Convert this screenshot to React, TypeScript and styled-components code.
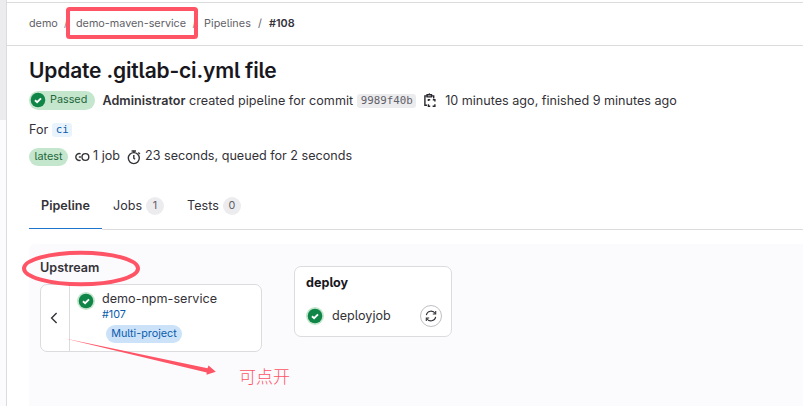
import React from "react";
import styled, { createGlobalStyle } from "styled-components";

const GlobalStyle = createGlobalStyle`
  * { box-sizing: border-box; }
  body {
    margin: 0;
    background: #fff;
    color: #333238;
    font-family: Inter, "Noto Sans CJK SC", sans-serif;
    font-feature-settings: "cv05" 1;
    overflow: hidden;
  }
`;

const Page = styled.div`
  position: relative;
  display: flex;
  width: 803px;
  height: 406px;
  overflow: hidden;
`;

const Sidebar = styled.aside`
  flex: none;
  width: 7px;
  border-right: 1px solid #dcdcde;
  background: linear-gradient(#ececef 0 120px, #fbfafd 120px);
`;

const Main = styled.main`
  flex: 1;
  padding-top: 2px;
`;

const Text = styled.span<{ $size?: number; $weight?: number; $color?: string; $track?: number }>`
  white-space: pre;
  font-size: ${(p) => p.$size ?? 12.6}px;
  font-weight: ${(p) => p.$weight ?? 400};
  color: ${(p) => p.$color ?? "#333238"};
  letter-spacing: ${(p) => p.$track ?? 0}px;
`;

const Breadcrumbs = styled.nav`
  display: flex;
  align-items: center;
  height: 44px;
  padding: 0 0 1px 22px;
  border: solid #dcdcde;
  border-width: 1px 0;
`;

const Crumb = styled(Text)<{ $w: number }>`
  width: ${(p) => p.$w}px;
`;

const Title = styled.h1`
  margin: 0;
  height: 45px;
  padding: 10px 0 0 22px;
  font-size: 21px;
  line-height: 29px;
  font-weight: 600;
  letter-spacing: -0.17px;
  color: #18171d;
`;

const Line = styled.div<{ $h: number }>`
  display: flex;
  align-items: center;
  height: ${(p) => p.$h}px;
  padding-left: 22px;
  line-height: 18px;
`;

const ForLine = styled(Line)`
  padding-top: 2px;
`;

const RaisedText = styled(Text)`
  padding-bottom: 2px;
`;

const Pill = styled.span<{ $w: number; $h: number; $tone: "green" | "blue" | "grey"; $gap?: number }>`
  display: flex;
  align-items: center;
  justify-content: ${(p) => (p.$gap ? "flex-start" : "center")};
  gap: ${(p) => p.$gap ?? 0}px;
  flex: none;
  width: ${(p) => p.$w}px;
  height: ${(p) => p.$h}px;
  padding-bottom: 1px;
  border-radius: 10px;
  background: ${(p) => ({ green: "#c3e6cd", blue: "#cbe2f9", grey: "#ececef" })[p.$tone]};
`;

const Code = styled.code<{ $w: number; $blue?: boolean }>`
  width: ${(p) => p.$w}px;
  height: 14px;
  border-radius: 3px;
  font: 10.8px/14px "DejaVu Sans Mono", monospace;
  text-align: center;
  color: ${(p) => (p.$blue ? "#0b5cad" : "#626168")};
  background: ${(p) => (p.$blue ? "#e9f3fc" : "#ececef")};
`;

const Space = styled.span<{ $w: number }>`
  flex: none;
  width: ${(p) => p.$w}px;
`;

const Tabs = styled.div`
  display: flex;
  height: 47px;
  margin: 17px 0 0 22px;
  border-bottom: 1px solid #dcdcde;
`;

const Tab = styled.div<{ $w: number; $active?: boolean }>`
  display: flex;
  align-items: center;
  justify-content: center;
  gap: 4px;
  width: ${(p) => p.$w}px;
  height: 47px;
  border-bottom: 1px solid ${(p) => (p.$active ? "#fff" : "transparent")};
  box-shadow: ${(p) => (p.$active ? "inset 0 -1px #1f75cb" : "none")};
`;

const TabLabel = styled(Text)`
  padding-bottom: 1px;
`;

const Graph = styled.section`
  display: flex;
  align-items: flex-start;
  gap: 32px;
  height: 162px;
  margin: 14px 0 0 22px;
  padding-left: 11px;
  border-top-left-radius: 6px;
  background: #fbfafd;
`;

const Upstream = styled.div`
  width: 222px;
`;

const UpstreamHeading = styled.div`
  height: 40px;
  padding-top: 12px;
  line-height: 20px;
`;

const Card = styled.div`
  border: 1px solid #dcdcde;
  border-radius: 7px;
  background: #fff;
`;

const UpstreamCard = styled(Card)`
  display: flex;
  height: 68px;
`;

const Collapse = styled.div`
  display: flex;
  align-items: center;
  justify-content: center;
  width: 29px;
  padding-right: 2px;
  border-right: 1px solid #dcdcde;
`;

const UpstreamBody = styled.div`
  display: flex;
  gap: 7px;
  padding: 7px 0 0 7px;
`;

const Details = styled.div`
  display: flex;
  flex-direction: column;
  margin-top: -1px;
  line-height: 15px;
`;

const PipelineLink = styled(Text)`
  padding-top: 1px;
`;

const PillRow = styled.div`
  padding: 3px 0 0 4px;
`;

const Stage = styled(Card)`
  width: 158px;
  height: 71px;
  margin-top: 22px;
  padding: 4px 9px 0 11px;
`;

const StageName = styled.div`
  line-height: 20px;
`;

const Job = styled.div`
  display: flex;
  align-items: center;
  height: 22px;
  margin-top: 12px;
`;

const JobName = styled(Text)`
  padding-bottom: 2px;
`;

const Retry = styled.span`
  display: flex;
  align-items: center;
  justify-content: center;
  width: 22px;
  height: 22px;
  margin-left: auto;
  border: 1px solid #bfbfc3;
  border-radius: 50%;
`;

const Overlay = styled.svg`
  position: absolute;
  inset: 0;
`;

const Note = styled.span`
  position: absolute;
  left: 239px;
  top: 364px;
  font: 300 17px/24px "Noto Sans CJK SC", sans-serif;
  color: #ff5465;
`;

const StatusSvg = styled.svg`
  flex: none;
`;

const Success = ({ halo = true }: { halo?: boolean }) => (
  <StatusSvg width="18" height="18" viewBox="0 0 18 18">
    {halo && <circle cx="9" cy="9" r="9" fill="#c3e6cd" />}
    <circle cx="9" cy="9" r="7.3" fill="#108548" />
    <path d="M6 9.2l2.1 2 3.9-3.9" fill="none" stroke="#fff" strokeWidth="1.9" />
  </StatusSvg>
);

const CopyIcon = () => (
  <svg width="14" height="15" viewBox="0 0 14 15" fill="none" stroke="#28272d" strokeWidth="1.4">
    <path d="M4 2.9H1.9v9.4H4M8.6 2.9h2.1v2.6" />
    <path d="M4.1 1.8h4.4v2.1H4.1z" />
    <path d="M5.8 1h1" />
    <path d="M5.4 8V6.7h1.8M9.8 6.7h2.1V8.4M5.4 11.2v2h1.8M9.6 13.2h2.3v-2" />
  </svg>
);

const JobsIcon = () => (
  <svg width="15" height="10" viewBox="0 0 15 10" fill="none" stroke="#333238" strokeWidth="1.4">
    <path d="M5.6 1.9A3.4 3.4 0 1 0 5.6 8.1" />
    <circle cx="10.4" cy="5" r="3.4" />
    <path d="M3.8 5h2.2" />
  </svg>
);

const TimerIcon = () => (
  <svg width="14" height="15" viewBox="0 0 14 15" fill="none" stroke="#333238" strokeWidth="1.4">
    <circle cx="6.8" cy="8.1" r="5.5" />
    <path d="M4.6 1h4.4M6.8 1v2M6.8 5v3.2l1.3 1M11.3 2.4l1.6 1.6" />
  </svg>
);

const Chevron = () => (
  <svg width="8" height="12" viewBox="0 0 8 12" fill="none" stroke="#333238" strokeWidth="1.4">
    <path d="M6.6 1L1.6 6l5 5" />
  </svg>
);

const RetryIcon = () => (
  <svg width="12" height="12" viewBox="0 0 12 12" fill="none" stroke="#333238" strokeWidth="1.1">
    <path d="M1.3 5.1A4.8 4.8 0 0 1 10.2 3.6M10.7 6.9A4.8 4.8 0 0 1 1.8 8.4" />
    <path d="M10.7 1v3H7.8M1.3 11V8h2.9" />
  </svg>
);

export default function App() {
  return (
    <Page>
      <GlobalStyle />
      <Sidebar />
      <Main>
        <Breadcrumbs>
          <Crumb $w={35} $size={10.8} $color="#626168">demo</Crumb>
          <Crumb $w={12} $size={10.8} $color="#89888d">/</Crumb>
          <Crumb $w={116.5} $size={10.8} $color="#626168">demo-maven-service</Crumb>
          <Crumb $w={11.5} $size={10.8} $color="#89888d">/</Crumb>
          <Crumb $w={54} $size={10.8} $color="#626168" $track={0.06}>Pipelines</Crumb>
          <Crumb $w={11} $size={10.8} $color="#626168">/</Crumb>
          <Crumb $w={40} $size={10.8} $weight={600}>#108</Crumb>
        </Breadcrumbs>
        <Title>Update .gitlab-ci.yml file</Title>
        <Line $h={19}>
          <Pill $w={66} $h={19} $tone="green" $gap={3}>
            <Success halo={false} />
            <Text $size={10.8} $color="#24663b">Passed</Text>
          </Pill>
          <Space $w={7.5} />
          <Text $weight={600}>Administrator</Text>
          <Text $track={0.02}> created pipeline for commit</Text>
          <Space $w={4} />
          <Code $w={59}>9989f40b</Code>
          <Space $w={7} />
          <CopyIcon />
          <Space $w={8} />
          <Text>10 minutes ago, finished 9 minutes ago</Text>
        </Line>
        <ForLine $h={38}>
          <Text>For</Text>
          <Space $w={4} />
          <Code $w={20} $blue>ci</Code>
        </ForLine>
        <Line $h={18}>
          <Pill $w={39} $h={18} $tone="green">
            <Text $size={10.8} $color="#24663b">latest</Text>
          </Pill>
          <Space $w={7} />
          <JobsIcon />
          <Space $w={3} />
          <RaisedText>1 job</RaisedText>
          <Space $w={7} />
          <TimerIcon />
          <Space $w={4} />
          <RaisedText>23 seconds, queued for 2 seconds</RaisedText>
        </Line>
        <Tabs>
          <Tab $w={73} $active><TabLabel $weight={600}>Pipeline</TabLabel></Tab>
          <Tab $w={73}>
            <TabLabel>Jobs</TabLabel>
            <Pill $w={18} $h={18} $tone="grey"><Text $size={10.8} $color="#626168">1</Text></Pill>
          </Tab>
          <Tab $w={78}>
            <TabLabel>Tests</TabLabel>
            <Pill $w={18} $h={18} $tone="grey"><Text $size={10.8} $color="#626168">0</Text></Pill>
          </Tab>
        </Tabs>
        <Graph>
          <Upstream>
            <UpstreamHeading><Text $weight={600}>Upstream</Text></UpstreamHeading>
            <UpstreamCard>
              <Collapse><Chevron /></Collapse>
              <UpstreamBody>
                <Success />
                <Details>
                  <Text>demo-npm-service</Text>
                  <PipelineLink $size={10.8} $color="#0b5cad">#107</PipelineLink>
                  <PillRow>
                    <Pill $w={76} $h={18} $tone="blue">
                      <Text $size={10.8} $color="#0b5cad">Multi-project</Text>
                    </Pill>
                  </PillRow>
                </Details>
              </UpstreamBody>
            </UpstreamCard>
          </Upstream>
          <Stage>
            <StageName><Text $weight={700} $color="#18171d">deploy</Text></StageName>
            <Job>
              <Success />
              <Space $w={8} />
              <JobName>deployjob</JobName>
              <Retry><RetryIcon /></Retry>
            </Job>
          </Stage>
        </Graph>
      </Main>
      <Overlay width="803" height="406" fill="none">
        <rect x="68" y="9" width="128" height="28" rx="1.5" stroke="#ff5465" strokeWidth="4" />
        <ellipse cx="81" cy="268.5" rx="57" ry="15.7" stroke="#ff5465" strokeWidth="4" />
        <path d="M64 338.3L207.5 368.3L208.5 365.5L215.8 371.8L206.5 374.8L206.7 372.5Z" fill="#ff5465" />
      </Overlay>
      <Note>可点开</Note>
    </Page>
  );
}
